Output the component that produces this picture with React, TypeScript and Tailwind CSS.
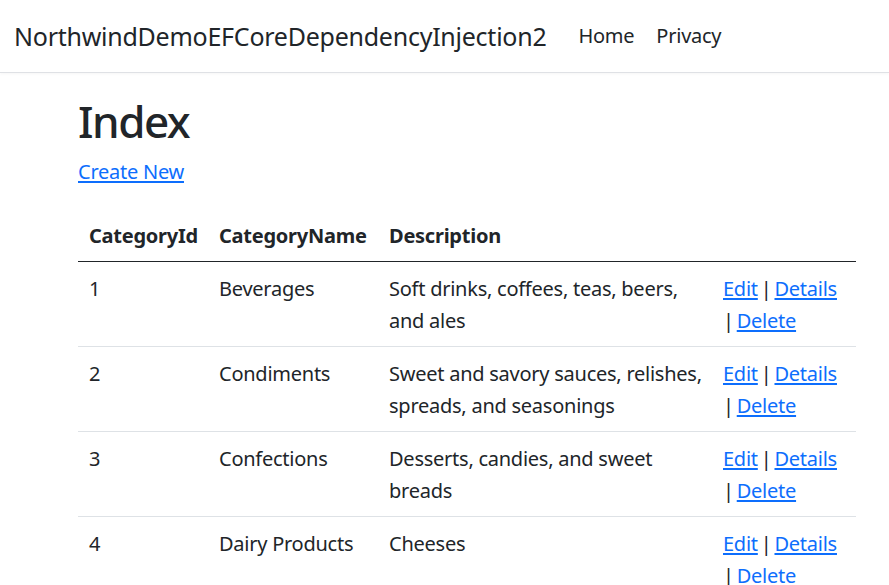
import React from "react";

const rows = [
  { id: 1, name: "Beverages", desc: ["Soft drinks, coffees, teas, beers,", "and ales"] },
  { id: 2, name: "Condiments", desc: ["Sweet and savory sauces, relishes,", "spreads, and seasonings"] },
  { id: 3, name: "Confections", desc: ["Desserts, candies, and sweet", "breads"] },
  { id: 4, name: "Dairy Products", desc: ["Cheeses"] },
];

function Link({ children }: { children: React.ReactNode }) {
  return (
    <a href="#" className="text-[#0d6efd] underline underline-offset-[2px]">
      {children}
    </a>
  );
}

export default function App() {
  return (
    <div
      className="min-h-[585px] bg-white text-[#212529] text-[20px] leading-[32px] tracking-[-0.25px]"
      style={{ fontFamily: '"Segoe UI", "Noto Sans", sans-serif' }}
    >
      <header className="h-[73px] border-b border-[#dfe1e5] shadow-[0_1px_3px_rgba(0,0,0,0.04)] flex items-center">
        <a href="#" className="ml-[14px] text-[25px] leading-[40px] text-[#212529] whitespace-nowrap">
          NorthwindDemoEFCoreDependencyInjection2
        </a>
        <nav className="flex ml-[21px]">
          <a href="#" className="px-[11px] text-[#212529]">Home</a>
          <a href="#" className="px-[11px] text-[#212529]">Privacy</a>
        </nav>
      </header>
      <main className="pl-[78px] pt-[22px]">
        <h1 className="text-[44px] leading-[52px] font-medium tracking-[-1.5px]">Index</h1>
        <p className="mt-[9px]">
          <Link>Create New</Link>
        </p>
        <table className="mt-[21px] w-[778px] border-collapse table-fixed">
          <colgroup>
            <col className="w-[130px]" />
            <col className="w-[170px]" />
            <col className="w-[334px]" />
            <col className="w-[144px]" />
          </colgroup>
          <thead>
            <tr className="border-b-[1.5px] border-[#212529]">
              <th className="text-left font-bold px-[11px] pt-[10.67px] pb-[9px] whitespace-nowrap">CategoryId</th>
              <th className="text-left font-bold px-[11px] pt-[10.67px] pb-[9px] whitespace-nowrap">CategoryName</th>
              <th className="text-left font-bold px-[11px] pt-[10.67px] pb-[9px] whitespace-nowrap">Description</th>
              <th className="px-[11px] pt-[10.67px] pb-[9px]"></th>
            </tr>
          </thead>
          <tbody>
            {rows.map((r) => (
              <tr key={r.id} className="border-b border-[#dee2e6] align-top">
                <td className="px-[11px] pt-[11.5px] pb-[8.5px]">{r.id}</td>
                <td className="px-[11px] pt-[11.5px] pb-[8.5px] whitespace-nowrap">{r.name}</td>
                <td className="px-[11px] pt-[11.5px] pb-[8.5px] whitespace-nowrap">
                  {r.desc.map((d, i) => (
                    <div key={i}>{d}</div>
                  ))}
                </td>
                <td className="px-[11px] pt-[11.5px] pb-[8.5px] whitespace-nowrap [word-spacing:-2px]">
                  <div>
                    <Link>Edit</Link> | <Link>Details</Link>
                  </div>
                  <div>
                    | <Link>Delete</Link>
                  </div>
                </td>
              </tr>
            ))}
          </tbody>
        </table>
      </main>
    </div>
  );
}
